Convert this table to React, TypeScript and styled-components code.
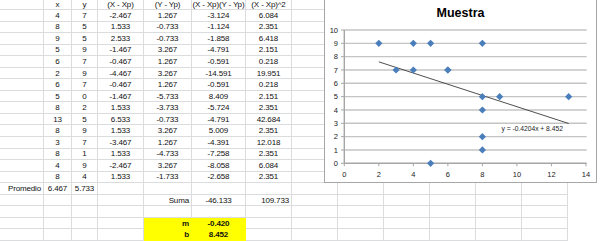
import styled, { createGlobalStyle } from "styled-components";

type Align = "left" | "center" | "right";
type Spec = string | { t: string; a?: Align; b?: boolean; y?: boolean };

const COLS = "44px 28px 26px 46px 48px 54px 46px 46px 46px 46px 46px 46px 46px";
const ROW_H = 11.55;

const points: [number, number][] = [
  [4, 7], [8, 5], [9, 5], [5, 9], [6, 7], [2, 9], [6, 7], [5, 0],
  [8, 2], [13, 5], [8, 9], [3, 7], [8, 1], [4, 9], [8, 4],
];

const table: string[][] = [
  ["-2.467", "1.267", "-3.124", "6.084"],
  ["1.533", "-0.733", "-1.124", "2.351"],
  ["2.533", "-0.733", "-1.858", "6.418"],
  ["-1.467", "3.267", "-4.791", "2.151"],
  ["-0.467", "1.267", "-0.591", "0.218"],
  ["-4.467", "3.267", "-14.591", "19.951"],
  ["-0.467", "1.267", "-0.591", "0.218"],
  ["-1.467", "-5.733", "8.409", "2.151"],
  ["1.533", "-3.733", "-5.724", "2.351"],
  ["6.533", "-0.733", "-4.791", "42.684"],
  ["1.533", "3.267", "5.009", "2.351"],
  ["-3.467", "1.267", "-4.391", "12.018"],
  ["1.533", "-4.733", "-7.258", "2.351"],
  ["-2.467", "3.267", "-8.058", "6.084"],
  ["1.533", "-1.733", "-2.658", "2.351"],
];

const rows: Spec[][] = [
  ["", "x", "y", "(X - Xp)", "(Y - Yp)", "(X - Xp)(Y - Yp)", "(X - Xp)^2"],
  ...points.map(([x, y], i) => ["", String(x), String(y), ...table[i]]),
  [{ t: "Promedio", a: "right" }, "6.467", "5.733"],
  ["", "", "", "", { t: "Suma", a: "right" }, "-46.133", { t: "109.733", a: "right" }],
  [],
  ["", "", "", "", { t: "m", a: "right", b: true, y: true }, { t: "-0.420", b: true, y: true }],
  ["", "", "", "", { t: "b", a: "right", b: true, y: true }, { t: "8.452", b: true, y: true }],
];

// chart scale, in page pixels
const px = (v: number) => 344.3 + 17.26 * v;
const py = (v: number) => 163.3 - 13.33 * v;
const trend = (x: number) => -0.4204 * x + 8.452;

export default function App() {
  return (
    <>
      <GlobalStyle />
      <Sheet>
        {rows.map((row, r) => (
          <Row key={r} $h={r === 0 ? 10 : ROW_H}>
            {Array.from({ length: 13 }, (_, c) => {
              const s = row[c] ?? "";
              const spec = typeof s === "string" ? { t: s } : s;
              return (
                <Cell
                  key={c}
                  $align={spec.a ?? (c === 0 ? "right" : "center")}
                  $bold={spec.b}
                  $fill={spec.y ? "#ffff00" : undefined}
                >
                  {spec.t}
                </Cell>
              );
            })}
          </Row>
        ))}

        <Chart>
          <ChartTitle>Muestra</ChartTitle>
          <Plot viewBox="325 27 271 155">
            {Array.from({ length: 10 }, (_, i) => (
              <line key={i} x1={px(0)} x2={586.7} y1={py(i + 1)} y2={py(i + 1)} stroke="#c4c4c4" strokeWidth={1.4} />
            ))}
            <line x1={px(0)} x2={px(0)} y1={py(0)} y2={py(10)} stroke="#a6a6a6" strokeWidth={1.4} />
            <line x1={px(0)} x2={586.7} y1={py(0)} y2={py(0)} stroke="#a6a6a6" strokeWidth={1.4} />
            {Array.from({ length: 11 }, (_, i) => (
              <g key={i}>
                <line x1={341} x2={px(0)} y1={py(i)} y2={py(i)} stroke="#a6a6a6" />
                <AxisText x={338} y={py(i) + 2.6} textAnchor="end">{i}</AxisText>
              </g>
            ))}
            {Array.from({ length: 8 }, (_, i) => (
              <g key={i}>
                <line x1={px(i * 2)} x2={px(i * 2)} y1={py(0)} y2={py(0) + 3} stroke="#a6a6a6" />
                <AxisText x={px(i * 2)} y={176.6} textAnchor="middle">{i * 2}</AxisText>
              </g>
            ))}
            <line x1={px(2)} y1={py(trend(2))} x2={px(13)} y2={py(trend(13))} stroke="#3a3a3a" strokeWidth={0.9} />
            {points.map(([x, y], i) => (
              <polygon
                key={i}
                points={`${px(x)},${py(y) - 3.6} ${px(x) + 3.6},${py(y)} ${px(x)},${py(y) + 3.6} ${px(x) - 3.6},${py(y)}`}
                fill="#4a7ebb"
              />
            ))}
            <EqText x={501.5} y={130.6}>y = -0.4204x + 8.452</EqText>
          </Plot>
        </Chart>
      </Sheet>
    </>
  );
}

const GlobalStyle = createGlobalStyle`
  body {
    margin: 0;
    background: #ffffff;
    font-family: "Liberation Sans", Arial, sans-serif;
  }
`;

const Sheet = styled.div`
  position: relative;
  width: 600px;
  height: 241px;
  overflow: hidden;
  background: #ffffff;
`;

const Row = styled.div<{ $h: number }>`
  display: grid;
  grid-template-columns: ${COLS};
  height: ${(p) => p.$h}px;
`;

const Cell = styled.div<{ $align: Align; $bold?: boolean; $fill?: string }>`
  display: flex;
  align-items: center;
  justify-content: ${(p) =>
    p.$align === "right" ? "flex-end" : p.$align === "left" ? "flex-start" : "center"};
  padding: 0 2px;
  border-right: 1px solid ${(p) => p.$fill ?? "#dadcdd"};
  border-bottom: 1px solid ${(p) => p.$fill ?? "#dadcdd"};
  background: ${(p) => p.$fill ?? "transparent"};
  font-size: 8px;
  letter-spacing: -0.15px;
  font-weight: ${(p) => (p.$bold ? 700 : 400)};
  color: #111111;
  white-space: nowrap;
  overflow: hidden;
`;

const Chart = styled.div`
  position: absolute;
  left: 324px;
  top: -10px;
  width: 273px;
  height: 193px;
  box-sizing: border-box;
  border: 1px solid #a6a6a6;
  background: #ffffff;
  display: flex;
  flex-direction: column;
`;

const ChartTitle = styled.div`
  padding-top: 8px;
  height: 28px;
  line-height: 28px;
  text-align: center;
  font-size: 12.5px;
  font-weight: 700;
  color: #000000;
`;

const Plot = styled.svg`
  display: block;
  width: 271px;
  height: 155px;
`;

const AxisText = styled.text`
  font-family: "Liberation Sans", Arial, sans-serif;
  font-size: 7.5px;
  fill: #222222;
`;

const EqText = styled.text`
  font-family: "Liberation Sans", Arial, sans-serif;
  font-size: 6.7px;
  fill: #222222;
`;
